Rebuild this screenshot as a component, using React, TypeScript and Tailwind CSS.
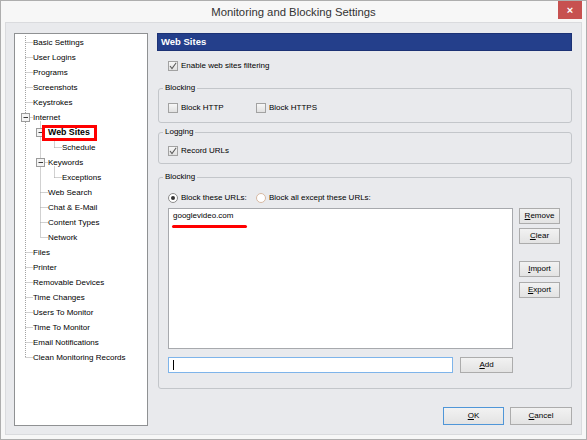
import React from 'react';

type TreeNode = { label: string; level: 0 | 1 | 2; box?: boolean; selected?: boolean };

const tree: TreeNode[] = [
  { label: 'Basic Settings', level: 0 },
  { label: 'User Logins', level: 0 },
  { label: 'Programs', level: 0 },
  { label: 'Screenshots', level: 0 },
  { label: 'Keystrokes', level: 0 },
  { label: 'Internet', level: 0, box: true },
  { label: 'Web Sites', level: 1, box: true, selected: true },
  { label: 'Schedule', level: 2 },
  { label: 'Keywords', level: 1, box: true },
  { label: 'Exceptions', level: 2 },
  { label: 'Web Search', level: 1 },
  { label: 'Chat & E-Mail', level: 1 },
  { label: 'Content Types', level: 1 },
  { label: 'Network', level: 1 },
  { label: 'Files', level: 0 },
  { label: 'Printer', level: 0 },
  { label: 'Removable Devices', level: 0 },
  { label: 'Time Changes', level: 0 },
  { label: 'Users To Monitor', level: 0 },
  { label: 'Time To Monitor', level: 0 },
  { label: 'Email Notifications', level: 0 },
  { label: 'Clean Monitoring Records', level: 0 },
];

const levelPad = ['pl-[18px]', 'pl-[33px]', 'pl-[47px]'];
const lineX = [10.5, 25.5, 39.5];
const rowY = (i: number) => 8.5 + 15 * i;

// last direct child of node i
const lastChild = (i: number) => {
  const lvl = tree[i].level;
  let last = i;
  for (let k = i + 1; k < tree.length; k++) {
    if (tree[k].level <= lvl) break;
    if (tree[k].level === lvl + 1) last = k;
  }
  return last;
};

const TreeLines = () => {
  const lastRoot = tree.map((n, i) => (n.level === 0 ? i : -1)).filter((i) => i >= 0).pop() as number;
  const dash = { stroke: '#a3a3a3', strokeWidth: 1, strokeDasharray: '1 1' };
  return (
    <svg className="absolute left-0 top-0" width="132" height="340">
      <line x1={lineX[0]} y1={2} x2={lineX[0]} y2={rowY(lastRoot)} {...dash} />
      {tree.map((n, i) =>
        n.box ? (
          <line key={'v' + i} x1={lineX[n.level + 1]} y1={rowY(i) + 4} x2={lineX[n.level + 1]} y2={rowY(lastChild(i))} {...dash} />
        ) : null
      )}
      {tree.map((n, i) => (
        <line key={'h' + i} x1={lineX[n.level]} y1={rowY(i)} x2={lineX[n.level] + 7} y2={rowY(i)} {...dash} />
      ))}
      {tree.map((n, i) =>
        n.box ? (
          <g key={'b' + i}>
            <rect x={lineX[n.level] - 4} y={rowY(i) - 4} width="8" height="8" fill="#f4f4f4" stroke="#9b9b9b" />
            <line x1={lineX[n.level] - 2} y1={rowY(i)} x2={lineX[n.level] + 2.5} y2={rowY(i)} stroke="#3a3a3a" />
          </g>
        ) : null
      )}
    </svg>
  );
};

const Check = ({ checked }: { checked?: boolean }) => (
  <span className="w-[10px] h-[10px] border border-[#a2a2a2] bg-linear-to-b from-[#f7f7f7] to-[#e1e1e1] flex items-center justify-center shrink-0">
    {checked && (
      <svg width="8" height="8" viewBox="0 0 8 8">
        <path d="M1 4 L3 6.6 L7.2 0.8" fill="none" stroke="#5c5c5c" strokeWidth="1.1" />
      </svg>
    )}
  </span>
);

const Radio = ({ checked, hot }: { checked?: boolean; hot?: boolean }) => (
  <span
    className={`w-[10px] h-[10px] rounded-full border bg-white flex items-center justify-center shrink-0 ${
      hot ? 'border-[#d7b9a3]' : 'border-[#8c8c8c]'
    }`}
  >
    {checked && <span className="w-[4px] h-[4px] rounded-full bg-[#333]" />}
  </span>
);

const Btn = ({ label, className = '', def }: { label: string; className?: string; def?: boolean }) => (
  <button
    className={`flex items-center justify-center border bg-linear-to-b from-[#f2f2f2] to-[#e3e3e3] text-[8px] text-black ${
      def ? 'border-[#4f96d8]' : 'border-[#acacac]'
    } ${className}`}
  >
    <span className="underline underline-offset-1">{label[0]}</span>
    {label.slice(1)}
  </button>
);

const Group = ({ title, className, children }: { title: string; className: string; children: React.ReactNode }) => (
  <fieldset className={`ml-[1px] border border-[#c3c6ca] rounded-[3px] ${className}`}>
    <legend className="ml-[4px] px-[2px] text-[8px] leading-[10px]">{title}</legend>
    {children}
  </fieldset>
);

export default function App() {
  return (
    <div className="w-[587px] h-[440px] bg-[#f7f7f7] border border-[#aeaeae] flex flex-col font-['Liberation_Sans',Arial,sans-serif] text-black select-none">
      <div className="relative h-[21px] shrink-0 flex items-center justify-center pt-[2px] text-[11.3px] text-[#333]">
        Monitoring and Blocking Settings
        <div className="absolute right-[4px] top-0 w-[24px] h-[18px] bg-[#c75150] flex items-center justify-center text-white text-[11px] font-bold leading-none">
          ×
        </div>
      </div>

      <div className="mx-[4px] h-[413px] bg-[#e9eaed] border border-[#dadbde] flex pl-[8px] pt-[10px]">
        {/* tree */}
        <div className="relative w-[134px] h-[393px] bg-white border border-[#8f9193] pt-[1px] overflow-hidden">
          <TreeLines />
          {tree.map((n) => (
            <div key={n.label} className={`relative h-[15px] flex items-center whitespace-nowrap text-[8px] ${levelPad[n.level]}`}>
              {n.selected ? (
                <span className="-ml-[6px] h-[16px] border-[3px] border-[#ff0000] pl-[3px] pr-[4px] flex items-center font-bold text-[8.8px] bg-white">
                  {n.label}
                </span>
              ) : (
                n.label
              )}
            </div>
          ))}
        </div>

        {/* right panel */}
        <div className="ml-[9px] w-[415px] flex flex-col">
          <div className="h-[18px] bg-[#243f8b] border border-[#1c3275] flex items-center pl-[3px] text-white font-bold text-[9.5px]">
            Web Sites
          </div>

          <div className="mt-[9px] h-[11px] pl-[11px] flex items-center gap-[3px] text-[8px]">
            <Check checked />
            <span>Enable web sites filtering</span>
          </div>

          <Group title="Blocking" className="mt-[12px] h-[40px]">
            <div className="pt-[9px] pl-[9px] h-[20px] flex items-center text-[8px]">
              <div className="w-[88px] flex items-center gap-[3px]">
                <Check />
                <span>Block HTTP</span>
              </div>
              <div className="flex items-center gap-[3px]">
                <Check />
                <span>Block HTTPS</span>
              </div>
            </div>
          </Group>

          <Group title="Logging" className="mt-[4px] h-[37px]">
            <div className="pt-[8px] pl-[9px] h-[19px] flex items-center gap-[3px] text-[8px]">
              <Check checked />
              <span>Record URLs</span>
            </div>
          </Group>

          <Group title="Blocking" className="mt-[8px] h-[217px]">
            <div className="pl-[9px] pt-[10px] flex flex-col text-[8px]">
              <div className="h-[11px] flex items-center">
                <div className="w-[88px] flex items-center gap-[3px]">
                  <Radio checked />
                  <span>Block these URLs:</span>
                </div>
                <div className="flex items-center gap-[3px]">
                  <Radio hot />
                  <span>Block all except these URLs:</span>
                </div>
              </div>

              <div className="mt-[5px] flex items-start">
                <div className="w-[345px] h-[141px] bg-white border border-[#a7a9ad] pl-[4px] pt-[2px]">
                  <div className="leading-[10px]">googlevideo.com</div>
                  <div className="mt-[4px] -ml-[1px] w-[75px] h-[3px] rounded-full bg-[#ff0000]" />
                </div>
                <div className="ml-[6px] flex flex-col">
                  <Btn label="Remove" className="w-[41px] h-[16px]" />
                  <Btn label="Clear" className="mt-[4px] w-[41px] h-[16px]" />
                  <Btn label="Import" className="mt-[17px] w-[41px] h-[16px]" />
                  <Btn label="Export" className="mt-[5px] w-[41px] h-[16px]" />
                </div>
              </div>

              <div className="mt-[8px] flex items-center">
                <div className="w-[285px] h-[16px] bg-white border border-[#7eb4ea] pl-[4px] flex items-center">
                  <span className="w-px h-[10px] bg-black" />
                </div>
                <Btn label="Add" className="ml-[7px] w-[53px] h-[16px]" />
              </div>
            </div>
          </Group>

          <div className="mt-[18px] flex justify-end gap-[6px]">
            <Btn label="OK" def className="w-[61px] h-[18px]" />
            <Btn label="Cancel" className="w-[62px] h-[18px]" />
          </div>
        </div>
      </div>
    </div>
  );
}
